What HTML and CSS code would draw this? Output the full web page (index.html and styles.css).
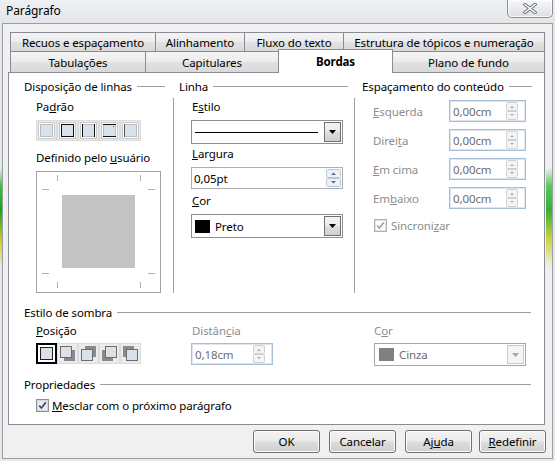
FILE: index.html
```html
<!DOCTYPE html>
<html lang="pt">
<head>
<meta charset="utf-8">
<title>Parágrafo</title>
<link rel="stylesheet" href="styles.css">
</head>
<body>
<div class="window">
  <div class="glass glass-left"></div>
  <div class="titlebar">
    <span class="title">Parágrafo</span>
    <div class="close-btn">
      <svg width="14" height="11" viewBox="0 0 14 11"><path d="M2 1.5 L12 9.5 M12 1.5 L2 9.5" stroke="#6b7079" stroke-width="3.4" stroke-linecap="square" fill="none"/><path d="M2 1.5 L12 9.5 M12 1.5 L2 9.5" stroke="#ffffff" stroke-width="1.6" stroke-linecap="square" fill="none"/></svg>
    </div>
  </div>
  <div class="client">
    <div class="tabs">
      <div class="tabrow">
        <div class="tab w-recuos">Recuos e espaçamento</div>
        <div class="tab w-alin">Alinhamento</div>
        <div class="tab w-fluxo">Fluxo do texto</div>
        <div class="tab w-estr">Estrutura de tópicos e numeração</div>
      </div>
      <div class="tabrow">
        <div class="tab w-tabul">Tabulações</div>
        <div class="tab w-capit">Capitulares</div>
        <div class="tab active w-bordas">Bordas</div>
        <div class="tab w-plano">Plano de fundo</div>
      </div>
    </div>
    <div class="pane">
      <div class="columns">
        <section class="col col-lines">
          <div class="group-head"><span>Disposição de linhas</span><i class="rule"></i></div>
          <div class="sublabel">Pa<u>d</u>rão</div>
          <div class="iconset">
            <svg width="21" height="21" viewBox="0 0 21 21"><rect x="0.5" y="0.5" width="20" height="20" fill="#ebebeb" stroke="#dcdcdc"/><rect x="2.5" y="2.5" width="16" height="16" fill="#fff" stroke="#c9c9c9"/><rect x="4.5" y="4.5" width="12" height="12" fill="#d9e1ea" stroke="#b4bcc6"/></svg>
            <svg width="21" height="21" viewBox="0 0 21 21"><rect x="0.5" y="0.5" width="20" height="20" fill="#ebebeb" stroke="#dcdcdc"/><rect x="2.5" y="2.5" width="16" height="16" fill="#fff" stroke="#c9c9c9"/><rect x="4.5" y="4.5" width="12" height="12" fill="#d9e1ea" stroke="#111"/></svg>
            <svg width="21" height="21" viewBox="0 0 21 21"><rect x="0.5" y="0.5" width="20" height="20" fill="#ebebeb" stroke="#dcdcdc"/><rect x="2.5" y="2.5" width="16" height="16" fill="#fff" stroke="#c9c9c9"/><rect x="4.5" y="4.5" width="12" height="12" fill="#d9e1ea" stroke="#b4bcc6"/><path d="M4.5 4 V17 M16.5 4 V17" stroke="#111"/></svg>
            <svg width="21" height="21" viewBox="0 0 21 21"><rect x="0.5" y="0.5" width="20" height="20" fill="#ebebeb" stroke="#dcdcdc"/><rect x="2.5" y="2.5" width="16" height="16" fill="#fff" stroke="#c9c9c9"/><rect x="4.5" y="4.5" width="12" height="12" fill="#d9e1ea" stroke="#b4bcc6"/><path d="M4 4.5 H17 M4 16.5 H17" stroke="#111"/><rect x="14" y="6" width="1" height="1" fill="#3d6fd1"/></svg>
            <svg width="21" height="21" viewBox="0 0 21 21"><rect x="0.5" y="0.5" width="20" height="20" fill="#ebebeb" stroke="#dcdcdc"/><rect x="2.5" y="2.5" width="16" height="16" fill="#fff" stroke="#c9c9c9"/><rect x="4.5" y="4.5" width="12" height="12" fill="#d9e1ea" stroke="#b4bcc6"/><path d="M4.5 4 V17" stroke="#555"/></svg>
          </div>
          <div class="sublabel gap-lg">Definido pelo <u>u</u>suário</div>
          <div class="userbox">
            <svg width="125" height="122" viewBox="0 0 125 122">
              <rect x="0.5" y="0.5" width="124" height="121" fill="#fff" stroke="#a3a3a3"/>
              <rect x="26" y="24" width="73" height="73" fill="#c3c3c3"/>
              <path d="M21.5 4 V10 M104.5 4 V10 M21.5 111 V117 M104.5 111 V117 M6 18.5 H13 M112 18.5 H119 M6 102.5 H13 M112 102.5 H119" stroke="#b0b0b0"/>
            </svg>
          </div>
        </section>
        <div class="vsep vsep-a"></div>
        <section class="col col-line">
          <div class="group-head"><span>Linha</span><i class="rule"></i></div>
          <div class="field-label">E<u>s</u>tilo</div>
          <div class="listbox lb-style">
            <span class="line-sample"></span>
            <span class="dd-btn"><svg width="7" height="4" viewBox="0 0 7 4"><polygon points="0,0 7,0 3.5,4" fill="#000"/></svg></span>
          </div>
          <div class="field-label fl-width"><u>L</u>argura</div>
          <div class="spinfield sf-width">
            <span class="sf-text">0,05pt</span>
            <svg class="spin" width="15" height="18" viewBox="0 0 15 18"><rect x="0.5" y="0.5" width="14" height="8" rx="1" fill="#eef2f7" stroke="#bcc6d3"/><rect x="0.5" y="9.5" width="14" height="8" rx="1" fill="#eef2f7" stroke="#bcc6d3"/><polygon points="5,6 10,6 7.5,3.5" fill="#4f6b8f"/><polygon points="5,12 10,12 7.5,14.5" fill="#4f6b8f"/></svg>
          </div>
          <div class="field-label fl-color"><u>C</u>or</div>
          <div class="listbox lb-color">
            <span class="swatch sw-black"></span>
            <span class="lb-text">Preto</span>
            <span class="dd-btn"><svg width="7" height="4" viewBox="0 0 7 4"><polygon points="0,0 7,0 3.5,4" fill="#000"/></svg></span>
          </div>
        </section>
        <div class="vsep vsep-b"></div>
        <section class="col col-spacing">
          <div class="group-head"><span>Espaçamento do conteúdo</span><i class="rule"></i></div>
          <div class="spacing-rows">
            <div class="sp-row"><span class="sp-label"><u>E</u>squerda</span>
              <div class="spinfield disabled sf-small"><span class="sf-text">0,00cm</span><svg class="spin" width="12" height="18" viewBox="0 0 12 18"><rect x="0.5" y="0.5" width="11" height="8" rx="1" fill="#f4f4f4" stroke="#d0d0d0"/><rect x="0.5" y="9.5" width="11" height="8" rx="1" fill="#f4f4f4" stroke="#d0d0d0"/><polygon points="4,6 8,6 6,4" fill="#a8a8a8"/><polygon points="4,12 8,12 6,14" fill="#a8a8a8"/></svg></div>
            </div>
            <div class="sp-row"><span class="sp-label">Direi<u>t</u>a</span>
              <div class="spinfield disabled sf-small"><span class="sf-text">0,00cm</span><svg class="spin" width="12" height="18" viewBox="0 0 12 18"><rect x="0.5" y="0.5" width="11" height="8" rx="1" fill="#f4f4f4" stroke="#d0d0d0"/><rect x="0.5" y="9.5" width="11" height="8" rx="1" fill="#f4f4f4" stroke="#d0d0d0"/><polygon points="4,6 8,6 6,4" fill="#a8a8a8"/><polygon points="4,12 8,12 6,14" fill="#a8a8a8"/></svg></div>
            </div>
            <div class="sp-row"><span class="sp-label"><u>E</u>m cima</span>
              <div class="spinfield disabled sf-small"><span class="sf-text">0,00cm</span><svg class="spin" width="12" height="18" viewBox="0 0 12 18"><rect x="0.5" y="0.5" width="11" height="8" rx="1" fill="#f4f4f4" stroke="#d0d0d0"/><rect x="0.5" y="9.5" width="11" height="8" rx="1" fill="#f4f4f4" stroke="#d0d0d0"/><polygon points="4,6 8,6 6,4" fill="#a8a8a8"/><polygon points="4,12 8,12 6,14" fill="#a8a8a8"/></svg></div>
            </div>
            <div class="sp-row"><span class="sp-label">Em<u>b</u>aixo</span>
              <div class="spinfield disabled sf-small"><span class="sf-text">0,00cm</span><svg class="spin" width="12" height="18" viewBox="0 0 12 18"><rect x="0.5" y="0.5" width="11" height="8" rx="1" fill="#f4f4f4" stroke="#d0d0d0"/><rect x="0.5" y="9.5" width="11" height="8" rx="1" fill="#f4f4f4" stroke="#d0d0d0"/><polygon points="4,6 8,6 6,4" fill="#a8a8a8"/><polygon points="4,12 8,12 6,14" fill="#a8a8a8"/></svg></div>
            </div>
          </div>
          <div class="check check-sync disabled">
            <svg width="13" height="13" viewBox="0 0 13 13"><rect x="0.5" y="0.5" width="12" height="12" fill="#f4f4f4" stroke="#b1b1b1"/><rect x="1.5" y="1.5" width="10" height="10" fill="#fbfbfb" stroke="#e2e2e2"/><path d="M3.2 6.6 L5.4 9 L9.8 3.4" stroke="#a2a2a2" stroke-width="1.6" fill="none"/></svg>
            <span>Sincroni<u>z</u>ar</span>
          </div>
        </section>
      </div>

      <section class="shadow">
        <div class="group-head"><span>Estilo de sombra</span><i class="rule"></i></div>
        <div class="shadow-grid">
          <span class="sg-label"><u>P</u>osição</span>
          <span class="sg-label disabled-text dist-label">Distân<u>c</u>ia</span>
          <span class="sg-label disabled-text">C<u>o</u>r</span>
          <div class="iconset">
            <svg width="21" height="21" viewBox="0 0 21 21"><rect x="0" y="0" width="21" height="21" fill="#fff"/><rect x="1" y="1" width="19" height="19" fill="none" stroke="#000" stroke-width="2"/><rect x="4.5" y="4.5" width="12" height="12" fill="#d9e1ea" stroke="#222"/></svg>
            <svg width="21" height="21" viewBox="0 0 21 21"><rect x="0.5" y="0.5" width="20" height="20" fill="#ebebeb" stroke="#dcdcdc"/><rect x="7" y="7" width="11" height="11" fill="#8a8a8a"/><rect x="3.5" y="3.5" width="11" height="11" fill="#d9e1ea" stroke="#6d6d6d"/></svg>
            <svg width="21" height="21" viewBox="0 0 21 21"><rect x="0.5" y="0.5" width="20" height="20" fill="#ebebeb" stroke="#dcdcdc"/><rect x="7" y="3" width="11" height="11" fill="#8a8a8a"/><rect x="3.5" y="6.5" width="11" height="11" fill="#d9e1ea" stroke="#6d6d6d"/></svg>
            <svg width="21" height="21" viewBox="0 0 21 21"><rect x="0.5" y="0.5" width="20" height="20" fill="#ebebeb" stroke="#dcdcdc"/><rect x="3" y="7" width="11" height="11" fill="#8a8a8a"/><rect x="6.5" y="3.5" width="11" height="11" fill="#d9e1ea" stroke="#6d6d6d"/></svg>
            <svg width="21" height="21" viewBox="0 0 21 21"><rect x="0.5" y="0.5" width="20" height="20" fill="#ebebeb" stroke="#dcdcdc"/><rect x="3" y="3" width="11" height="11" fill="#8a8a8a"/><rect x="6.5" y="6.5" width="11" height="11" fill="#d9e1ea" stroke="#6d6d6d"/></svg>
          </div>
          <div class="spinfield disabled sf-dist"><span class="sf-text">0,18cm</span><svg class="spin" width="12" height="18" viewBox="0 0 12 18"><rect x="0.5" y="0.5" width="11" height="8" rx="1" fill="#f4f4f4" stroke="#d0d0d0"/><rect x="0.5" y="9.5" width="11" height="8" rx="1" fill="#f4f4f4" stroke="#d0d0d0"/><polygon points="4,6 8,6 6,4" fill="#a8a8a8"/><polygon points="4,12 8,12 6,14" fill="#a8a8a8"/></svg></div>
          <div class="listbox lb-shadow disabled">
            <span class="swatch sw-gray"></span>
            <span class="lb-text">Cinza</span>
            <span class="dd-btn"><svg width="7" height="4" viewBox="0 0 7 4"><polygon points="0,0 7,0 3.5,4" fill="#a6a6a6"/></svg></span>
          </div>
        </div>
      </section>

      <section class="props">
        <div class="group-head"><span>Propriedades</span><i class="rule"></i></div>
        <div class="check check-merge">
          <svg width="13" height="13" viewBox="0 0 13 13"><rect x="0.5" y="0.5" width="12" height="12" fill="#f1f1f1" stroke="#8e8f8f"/><rect x="1.5" y="1.5" width="10" height="10" fill="#e9ebee" stroke="#d3d6da"/><path d="M3.2 6.6 L5.4 9 L9.8 3.4" stroke="#34477a" stroke-width="1.7" fill="none"/></svg>
          <span><u>M</u>esclar com o próximo parágrafo</span>
        </div>
      </section>
    </div>
    <div class="buttons">
      <button class="btn btn-ok">OK</button>
      <button class="btn btn-cancel">Cancelar</button>
      <button class="btn btn-help">Aj<u>u</u>da</button>
      <button class="btn btn-reset"><u>R</u>edefinir</button>
    </div>
  </div>
  <div class="glass glass-right"></div>
</div>
</body>
</html>
```

FILE: styles.css
```css
* { box-sizing: border-box; }

html, body {
  margin: 0;
  padding: 0;
}

body {
  width: 555px;
  height: 461px;
  overflow: hidden;
  font-family: "Noto Sans", "Segoe UI", sans-serif;
  font-size: 11.5px;
  letter-spacing: -0.1px;
  line-height: 15px;
  color: #000;
  background: #e8eaec;
}

u { text-decoration: underline; text-underline-offset: 1px; }

.window {
  position: relative;
  width: 555px;
  height: 461px;
  background: linear-gradient(180deg, #eef0f2 0px, #e3e6e9 23px, #e7e9eb 24px, #e7e9eb 100%);
}

.glass {
  position: absolute;
  top: 168px;
  height: 100px;
  background: linear-gradient(180deg, rgba(80, 200, 80, 0) 0%, #3cc23c 18%, #16a316 42%, #c9cf22 72%, rgba(230, 230, 60, 0) 100%);
}
.glass-left { left: 0; width: 2px; }
.glass-right { left: 546px; width: 6px; opacity: 0.85; }

/* title bar */
.titlebar {
  height: 23px;
  display: flex;
  justify-content: space-between;
  align-items: flex-start;
  padding-left: 6px;
}
.title {
  margin-top: 3px;
  font-size: 12px;
  line-height: 16px;
}
.close-btn {
  width: 46px;
  height: 18px;
  margin-right: 2px;
  border: 1px solid #8b8e94;
  border-top: none;
  border-radius: 0 0 5px 5px;
  background: linear-gradient(180deg, #f6f7f8 0%, #e8eaed 55%, #dcdfe3 100%);
  box-shadow: inset 0 0 0 1px rgba(255, 255, 255, 0.75);
  display: flex;
  align-items: center;
  justify-content: center;
}

/* client area */
.client {
  margin-left: 2px;
  width: 551px;
  height: 436px;
  border: 1px solid #9a9da2;
  background: #f0f0f0;
}

/* tabs */
.tabs { padding: 8px 0 0 7px; }
.tabrow { display: flex; height: 20px; }
.tabrow + .tabrow { margin-top: -1px; height: 21px; }
.tab {
  height: 100%;
  margin-left: -1px;
  border: 1px solid #898c95;
  background: linear-gradient(180deg, #f4f4f4 0%, #ececec 48%, #e1e1e1 52%, #d9d9d9 100%);
  display: flex;
  align-items: center;
  justify-content: center;
  white-space: nowrap;
}
.tab:first-child { margin-left: 0; }
.tabrow + .tabrow .tab { border-bottom: none; }
.tab.active {
  position: relative;
  z-index: 2;
  margin-top: -2px;
  height: 24px;
  background: #fff;
  font-weight: bold;
  padding-bottom: 1px;
}
.w-recuos { width: 146px; }
.w-alin { width: 90px; }
.w-fluxo { width: 100px; }
.w-estr { width: 202px; }
.w-tabul { width: 136px; }
.w-capit { width: 134px; }
.w-bordas { width: 115px; }
.w-plano { width: 153px; }

/* tab page */
.pane {
  margin-left: 5px;
  width: 537px;
  height: 353px;
  border: 1px solid #898c95;
  background: #fff;
  padding: 6px 0 0 15px;
}

.group-head {
  display: flex;
  align-items: center;
  height: 15px;
  white-space: nowrap;
}
.group-head .rule {
  flex: 1;
  height: 1px;
  margin-left: 5px;
  background: #a0a0a0;
}

.columns { display: flex; height: 215px; }
.col-lines { width: 141px; }
.col-line { width: 169px; margin-left: 5px; }
.col-spacing { width: 170px; margin-left: 7px; }
.vsep {
  width: 1px;
  height: 195px;
  margin-top: 19px;
  background: #a0a0a0;
}
.vsep-a { margin-left: 8px; }
.vsep-b { margin-left: 6px; }

.sublabel { padding-left: 12px; margin-top: 5px; }
.sublabel.gap-lg { margin-top: 9px; }

.iconset {
  display: flex;
  width: 105px;
  height: 21px;
  margin: 6px 0 0 12px;
}
.iconset svg { display: block; }

.userbox { margin: 6px 0 0 12px; height: 122px; }
.userbox svg { display: block; }

.field-label { padding-left: 13px; margin-top: 5px; }
.field-label.fl-width { margin-top: 2px; }
.field-label.fl-color { margin-top: 4px; }

.listbox {
  display: flex;
  align-items: center;
  height: 24px;
  width: 152px;
  margin-left: 12px;
  border: 1px solid #8f8f8f;
  background: #fff;
  padding: 1px;
}
.lb-style { margin-top: 6px; }
.lb-color { margin-top: 6px; height: 24px; }
.line-sample {
  flex: 1;
  height: 1px;
  margin: 0 6px 0 2px;
  background: #000;
}
.dd-btn {
  width: 17px;
  height: 100%;
  border: 1px solid #707070;
  background: linear-gradient(180deg, #f3f3f3 0%, #ebebeb 48%, #dddddd 52%, #d0d0d0 100%);
  display: flex;
  align-items: center;
  justify-content: center;
  flex: none;
}
.dd-btn svg { display: block; }
.swatch {
  width: 15px;
  height: 13px;
  margin-left: 2px;
  flex: none;
}
.sw-black { background: #000; }
.sw-gray { background: #808080; }
.lb-text { flex: 1; margin-left: 5px; }

.spinfield {
  display: flex;
  align-items: center;
  height: 22px;
  border: 1px solid #abadb3;
  background: #fff;
  padding: 0 1px 0 2px;
}
.spinfield .sf-text { flex: 1; }
.spinfield .spin { display: block; flex: none; }
.sf-width { width: 152px; margin: 6px 0 0 12px; }

.spinfield.disabled {
  border-color: #a8bed6;
  box-shadow: inset 0 0 0 1px #dde6f0;
  color: #6d6d6d;
  padding-right: 7px;
}
.spinfield.disabled .sf-text { padding-left: 1px; }

.spacing-rows {
  display: flex;
  flex-direction: column;
  gap: 7px;
  margin-top: 6px;
}
.sp-row { display: flex; align-items: center; height: 22px; }
.sp-label {
  width: 87px;
  padding-left: 11px;
  color: #8d8d8d;
}
.sf-small { width: 77px; }

.check {
  display: flex;
  align-items: center;
  height: 15px;
}
.check svg { display: block; flex: none; }
.check-sync { margin: 9px 0 0 12px; }
.check-sync span { margin-left: 4px; color: #8d8d8d; }

.disabled-text { color: #8d8d8d; }

/* shadow section */
.shadow { width: 507px; margin-top: 11px; }
.shadow-grid {
  display: grid;
  grid-template-columns: 155px 183px 152px;
  grid-template-rows: 15px 23px;
  row-gap: 5px;
  margin-top: 3px;
  padding-left: 12px;
}
.shadow-grid .iconset { margin: 0; }
.dist-label { padding-left: 1px; }
.sf-dist { width: 82px; }
.lb-shadow { margin-left: 0; height: 23px; }
.listbox.disabled { border-color: #a6a6a6; color: #6e6e6e; }
.listbox.disabled .swatch { margin-left: 3px; }
.listbox.disabled .dd-btn {
  border-color: #c9c9c9;
  background: #f4f4f4;
}

/* properties */
.props { width: 507px; margin-top: 11px; }
.check-merge { margin: 6px 0 0 12px; }
.check-merge span { margin-left: 3px; }

/* buttons */
.buttons {
  display: flex;
  justify-content: flex-end;
  padding-right: 6px;
  margin-top: 5px;
}
.btn {
  width: 67px;
  height: 23px;
  padding: 0;
  border: 1px solid #707070;
  border-radius: 3px;
  background: linear-gradient(180deg, #f2f2f2 0%, #ebebeb 48%, #dddddd 52%, #cfcfcf 100%);
  box-shadow: inset 0 0 0 1px #fbfbfb;
  font-family: inherit;
  font-size: 11.5px;
  letter-spacing: -0.1px;
  color: #000;
}
.btn-ok, .btn-cancel { margin-right: 9px; }
.btn-help { margin-right: 7px; }
```
